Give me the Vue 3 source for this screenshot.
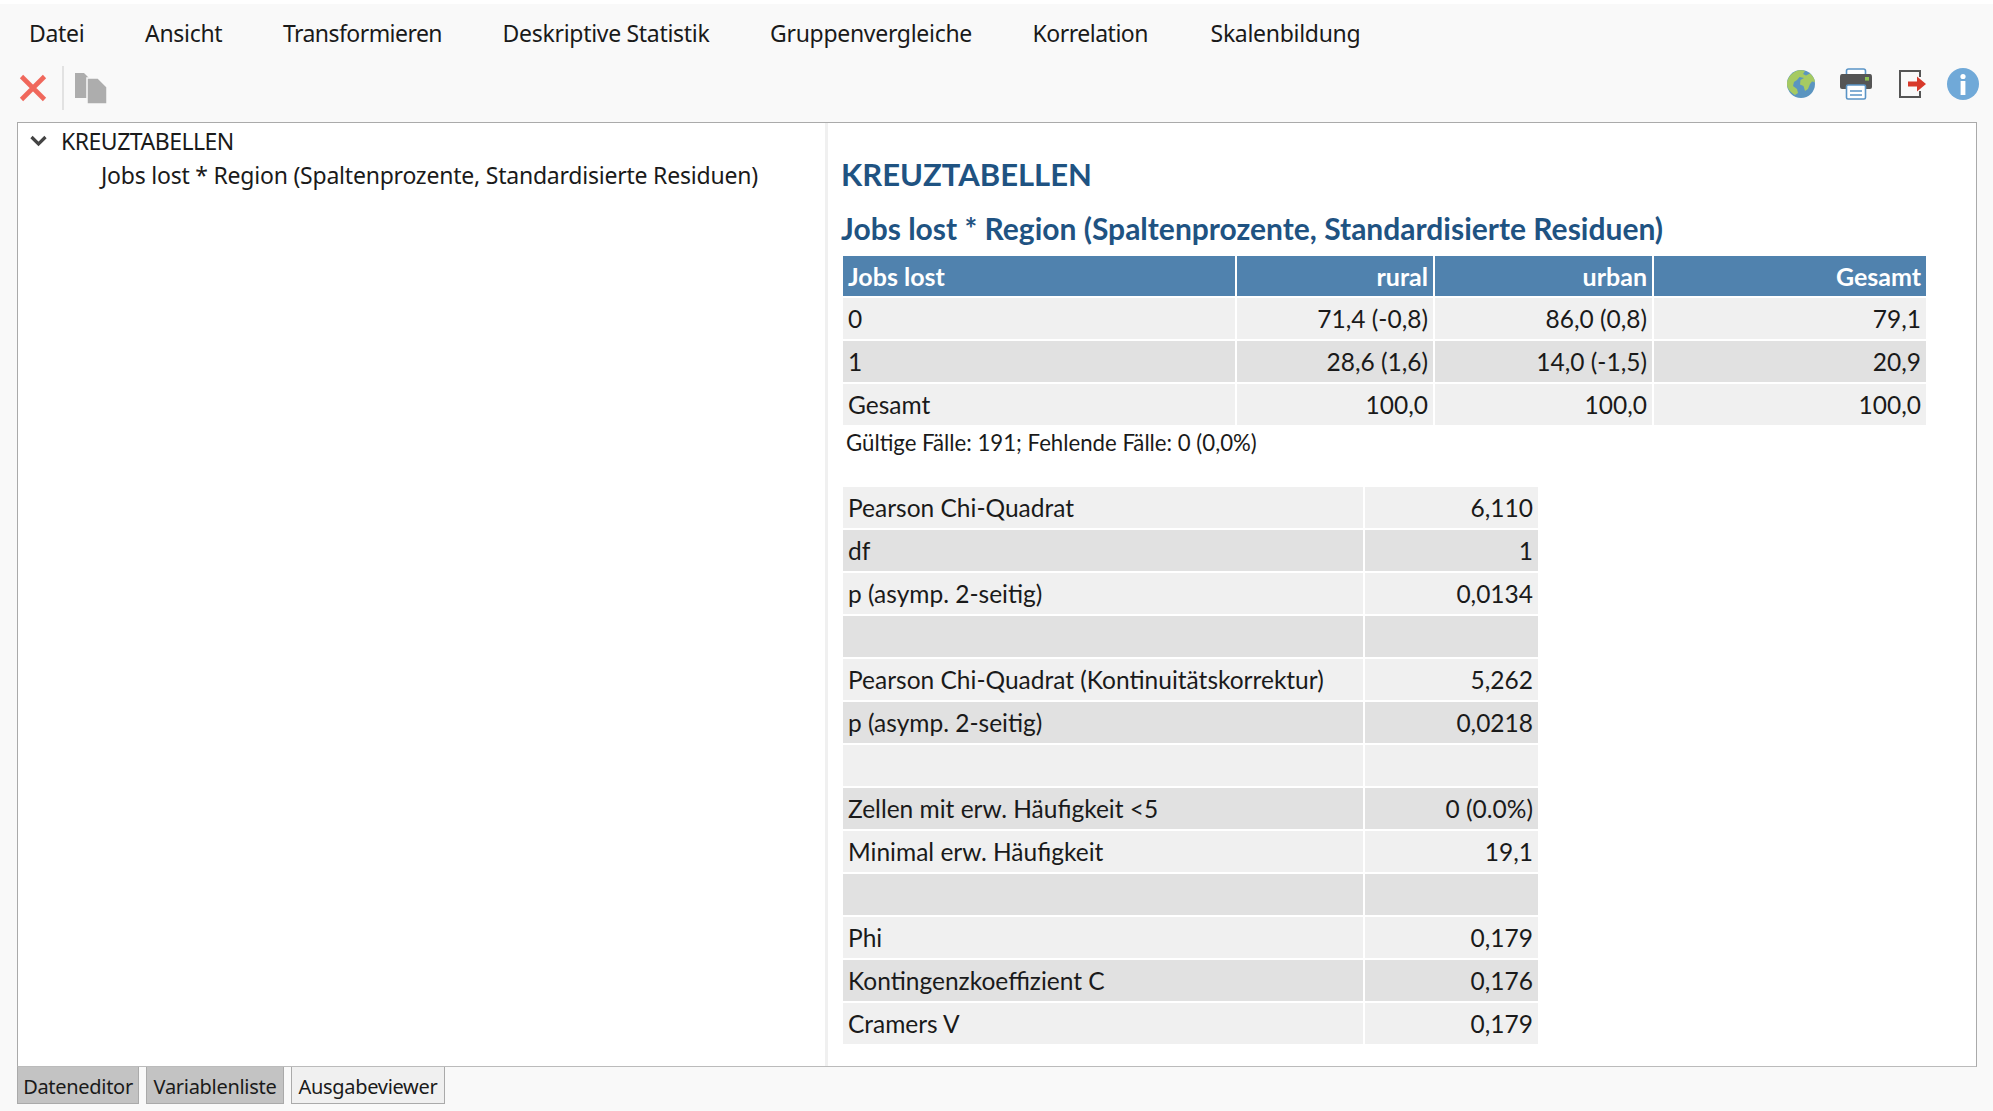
<template>
  <div class="app">
    <div class="topline"></div>

    <nav class="menubar">
      <span v-for="m in menus" :key="m" class="menu-item">{{ m }}</span>
    </nav>

    <div class="toolbar">
      <div class="tools-left">
        <svg class="ic-close" width="28" height="28" viewBox="0 0 28 28">
          <path d="M2.5 2.5 L25.5 25.5 M25.5 2.5 L2.5 25.5" stroke="#f0685c" stroke-width="4.6" fill="none" />
        </svg>
        <span class="tool-sep"></span>
        <svg class="ic-copy" width="32" height="31" viewBox="0 0 32 31">
          <path d="M0 0 H9 L14 5 V25 H0 Z" fill="#adadad" />
          <path d="M12 5 H23 L32 14 V31 H12 Z" fill="#adadad" stroke="#f9f9f9" stroke-width="1.5" />
        </svg>
      </div>
      <div class="tools-right">
        <svg class="ic-globe" width="30" height="30" viewBox="0 0 30 30">
          <circle cx="15" cy="15" r="14" fill="#5b95c0" />
          <path d="M9 2.8 C12 1 17 1 19 2 L17 5 L20 6.5 L24 4.5 C27 7 28.5 10 29 13 L26 12.5 L24 15 L22 20 L19 22 L17.5 17 L14 15.5 L14.5 11 L18 9 L13.5 8 L11 11 L8 13 L7 17 L11 20 L12 24 L9 26 C4.5 23.5 1 19.5 1 15 C1 10 4.5 5 9 2.8 Z" fill="#a6ca62" />
        </svg>
        <svg class="ic-print" width="34" height="32" viewBox="0 0 34 32">
          <rect x="7.5" y="1" width="19" height="12" rx="2" fill="#fff" stroke="#5a94c6" stroke-width="1.6" />
          <path d="M3 6 H31 Q33 6 33 9 V19 Q33 21 31 21 H3 Q1 21 1 19 V9 Q1 6 3 6 Z" fill="#555" />
          <rect x="26" y="9" width="4" height="3.6" fill="#8cc152" />
          <rect x="7.5" y="17" width="19" height="14" rx="1.5" fill="#fff" stroke="#5a94c6" stroke-width="1.6" />
          <path d="M11 23 H23 M11 27 H23" stroke="#5a94c6" stroke-width="1.6" />
        </svg>
        <svg class="ic-exit" width="28" height="28" viewBox="0 0 28 28">
          <path d="M21 7 V1 H1 V27 H21 V21" fill="none" stroke="#555" stroke-width="2" />
          <path d="M9 11.5 H18 V6.5 L27 14 L18 21.5 V16.5 H9 Z" fill="#d8392b" />
        </svg>
        <svg width="32" height="32" viewBox="0 0 32 32">
          <circle cx="16" cy="16" r="16" fill="#70a9d8" />
          <circle cx="16" cy="8.5" r="2.6" fill="#fff" />
          <rect x="13.6" y="13" width="4.8" height="14" fill="#fff" />
        </svg>
      </div>
    </div>

    <main class="panel">
      <aside class="tree">
        <div class="tree-root">
          <svg class="chevron" width="17" height="12" viewBox="0 0 17 12">
            <path d="M1.5 2 L8.5 9 L15.5 2" fill="none" stroke="#444" stroke-width="3.2" />
          </svg>
          <span>KREUZTABELLEN</span>
        </div>
        <div class="tree-child">Jobs lost * Region (Spaltenprozente, Standardisierte Residuen)</div>
      </aside>

      <section class="output">
        <h1>KREUZTABELLEN</h1>
        <h2>Jobs lost * Region (Spaltenprozente, Standardisierte Residuen)</h2>

        <table class="cross">
          <thead>
            <tr>
              <th class="c1">Jobs lost</th>
              <th class="c2 num">rural</th>
              <th class="c3 num">urban</th>
              <th class="c4 num">Gesamt</th>
            </tr>
          </thead>
          <tbody>
            <tr v-for="(row, i) in crossRows" :key="i" :class="i % 2 ? 'dark' : 'light'">
              <td>{{ row[0] }}</td>
              <td class="num">{{ row[1] }}</td>
              <td class="num">{{ row[2] }}</td>
              <td class="num">{{ row[3] }}</td>
            </tr>
          </tbody>
        </table>
        <p class="note">Gültige Fälle: 191; Fehlende Fälle: 0 (0,0%)</p>

        <table class="stats">
          <tbody>
            <tr v-for="(row, i) in statRows" :key="i" :class="i % 2 ? 'dark' : 'light'">
              <td class="s1">{{ row[0] }}</td>
              <td class="s2 num">{{ row[1] }}</td>
            </tr>
          </tbody>
        </table>
      </section>
    </main>

    <div class="tabs">
      <span class="tab tab-a">Dateneditor</span>
      <span class="tab tab-b">Variablenliste</span>
      <span class="tab tab-c">Ausgabeviewer</span>
    </div>
  </div>
</template>

<script setup>
const menus = ['Datei', 'Ansicht', 'Transformieren', 'Deskriptive Statistik', 'Gruppenvergleiche', 'Korrelation', 'Skalenbildung']

const crossRows = [
  ['0', '71,4 (-0,8)', '86,0 (0,8)', '79,1'],
  ['1', '28,6 (1,6)', '14,0 (-1,5)', '20,9'],
  ['Gesamt', '100,0', '100,0', '100,0'],
]

const statRows = [
  ['Pearson Chi-Quadrat', '6,110'],
  ['df', '1'],
  ['p (asymp. 2-seitig)', '0,0134'],
  ['\u00a0', ''],
  ['Pearson Chi-Quadrat (Kontinuitätskorrektur)', '5,262'],
  ['p (asymp. 2-seitig)', '0,0218'],
  ['\u00a0', ''],
  ['Zellen mit erw. Häufigkeit <5', '0 (0.0%)'],
  ['Minimal erw. Häufigkeit', '19,1'],
  ['\u00a0', ''],
  ['Phi', '0,179'],
  ['Kontingenzkoeffizient C', '0,176'],
  ['Cramers V', '0,179'],
]
</script>

<style scoped>
.app {
  width: 1993px; height: 1111px; overflow: hidden;
  background: #f9f9f9; display: flex; flex-direction: column;
  font-family: "Noto Sans", sans-serif; color: #1a1a1a;
}
.topline { height: 4px; background: #fff; flex-shrink: 0; }

.menubar {
  height: 53px; padding: 4px 0 0 29px; box-sizing: border-box; display: flex; align-items: center; gap: 60.6px;
  font-size: 23px; letter-spacing: -0.3px; flex-shrink: 0;
}
.menu-item:nth-child(3) { letter-spacing: -0.55px; }
.menu-item:nth-child(6) { letter-spacing: -0.5px; }
.menu-item:nth-child(7) { margin-left: 2px; }

.toolbar {
  height: 65px; flex-shrink: 0; display: flex; align-items: flex-start; justify-content: space-between;
}
.tools-left { display: flex; align-items: flex-start; padding: 17px 0 0 19px; }
.tool-sep { width: 2px; height: 44px; background: #e2e2e2; margin: -8px 11px 0 15px; }
.ic-copy { margin-top: -1px; }
.tools-right { display: flex; align-items: center; gap: 21px; padding: 11px 14px 0 0; }
.ic-globe { margin-right: 2px; }
.ic-print { margin-right: 5px; }
.ic-exit { margin-right: -1px; }

.panel {
  margin: 0 16px 0 17px; height: 945px; flex-shrink: 0;
  background: #fff; border: 1px solid #aaa; border-bottom-color: #bbb;
  display: flex; box-sizing: border-box;
}
.tree { width: 810px; flex-shrink: 0; box-sizing: border-box; border-right: 3px solid #f0f0f0; font-size: 23px; letter-spacing: -0.22px; }
.tree-root { display: flex; align-items: center; height: 34px; margin-top: 1px; padding-left: 12px; gap: 14px; letter-spacing: -0.5px; }
.tree-child { padding-left: 83px; height: 34px; line-height: 34px; white-space: nowrap; }

.output { padding-left: 13px; font-family: Lato, sans-serif; }
h1 { margin: 29px 0 0; font-size: 31px; line-height: 44px; font-weight: 700; color: #1f5382; }
h2 { margin: 13px 0 0; font-size: 30px; line-height: 38px; font-weight: 700; color: #1f5382; white-space: nowrap; }

table { border-collapse: separate; border-spacing: 2px; font-size: 24.5px; table-layout: fixed; }
.cross { margin-top: 7px; width: 1087px; }
.c1 { width: 392px; }
.c2 { width: 196px; }
.c3 { width: 217px; }
th, td { box-sizing: border-box; padding: 0 5px; }
th { height: 40px; background: #5082ae; color: #fff; text-align: left; font-weight: 700; font-size: 25px; }
td { height: 41px; }
th.num, td.num { text-align: right; }
.light td { background: #f0f0f0; }
.dark td { background: #e1e1e1; }

.note { margin: 0 0 0 5px; height: 30px; line-height: 32px; font-size: 22.2px; }

.stats { margin-top: 28px; width: 699px; }
.s1 { width: 520px; }

.tabs { display: flex; margin-left: 17px; gap: 7px; flex-shrink: 0; }
.tab {
  height: 37px; line-height: 39px; box-sizing: border-box; padding: 0 4px; font-size: 20px; letter-spacing: -0.3px;
  border: 1px solid #aaa; border-top: 0; text-align: center; white-space: nowrap;
}
.tab-a, .tab-b { background: #c3c3c3; }
.tab-a { width: 122px; }
.tab-b { width: 138px; }
.tab-c { width: 154px; background: #f0f0f0; }
</style>
